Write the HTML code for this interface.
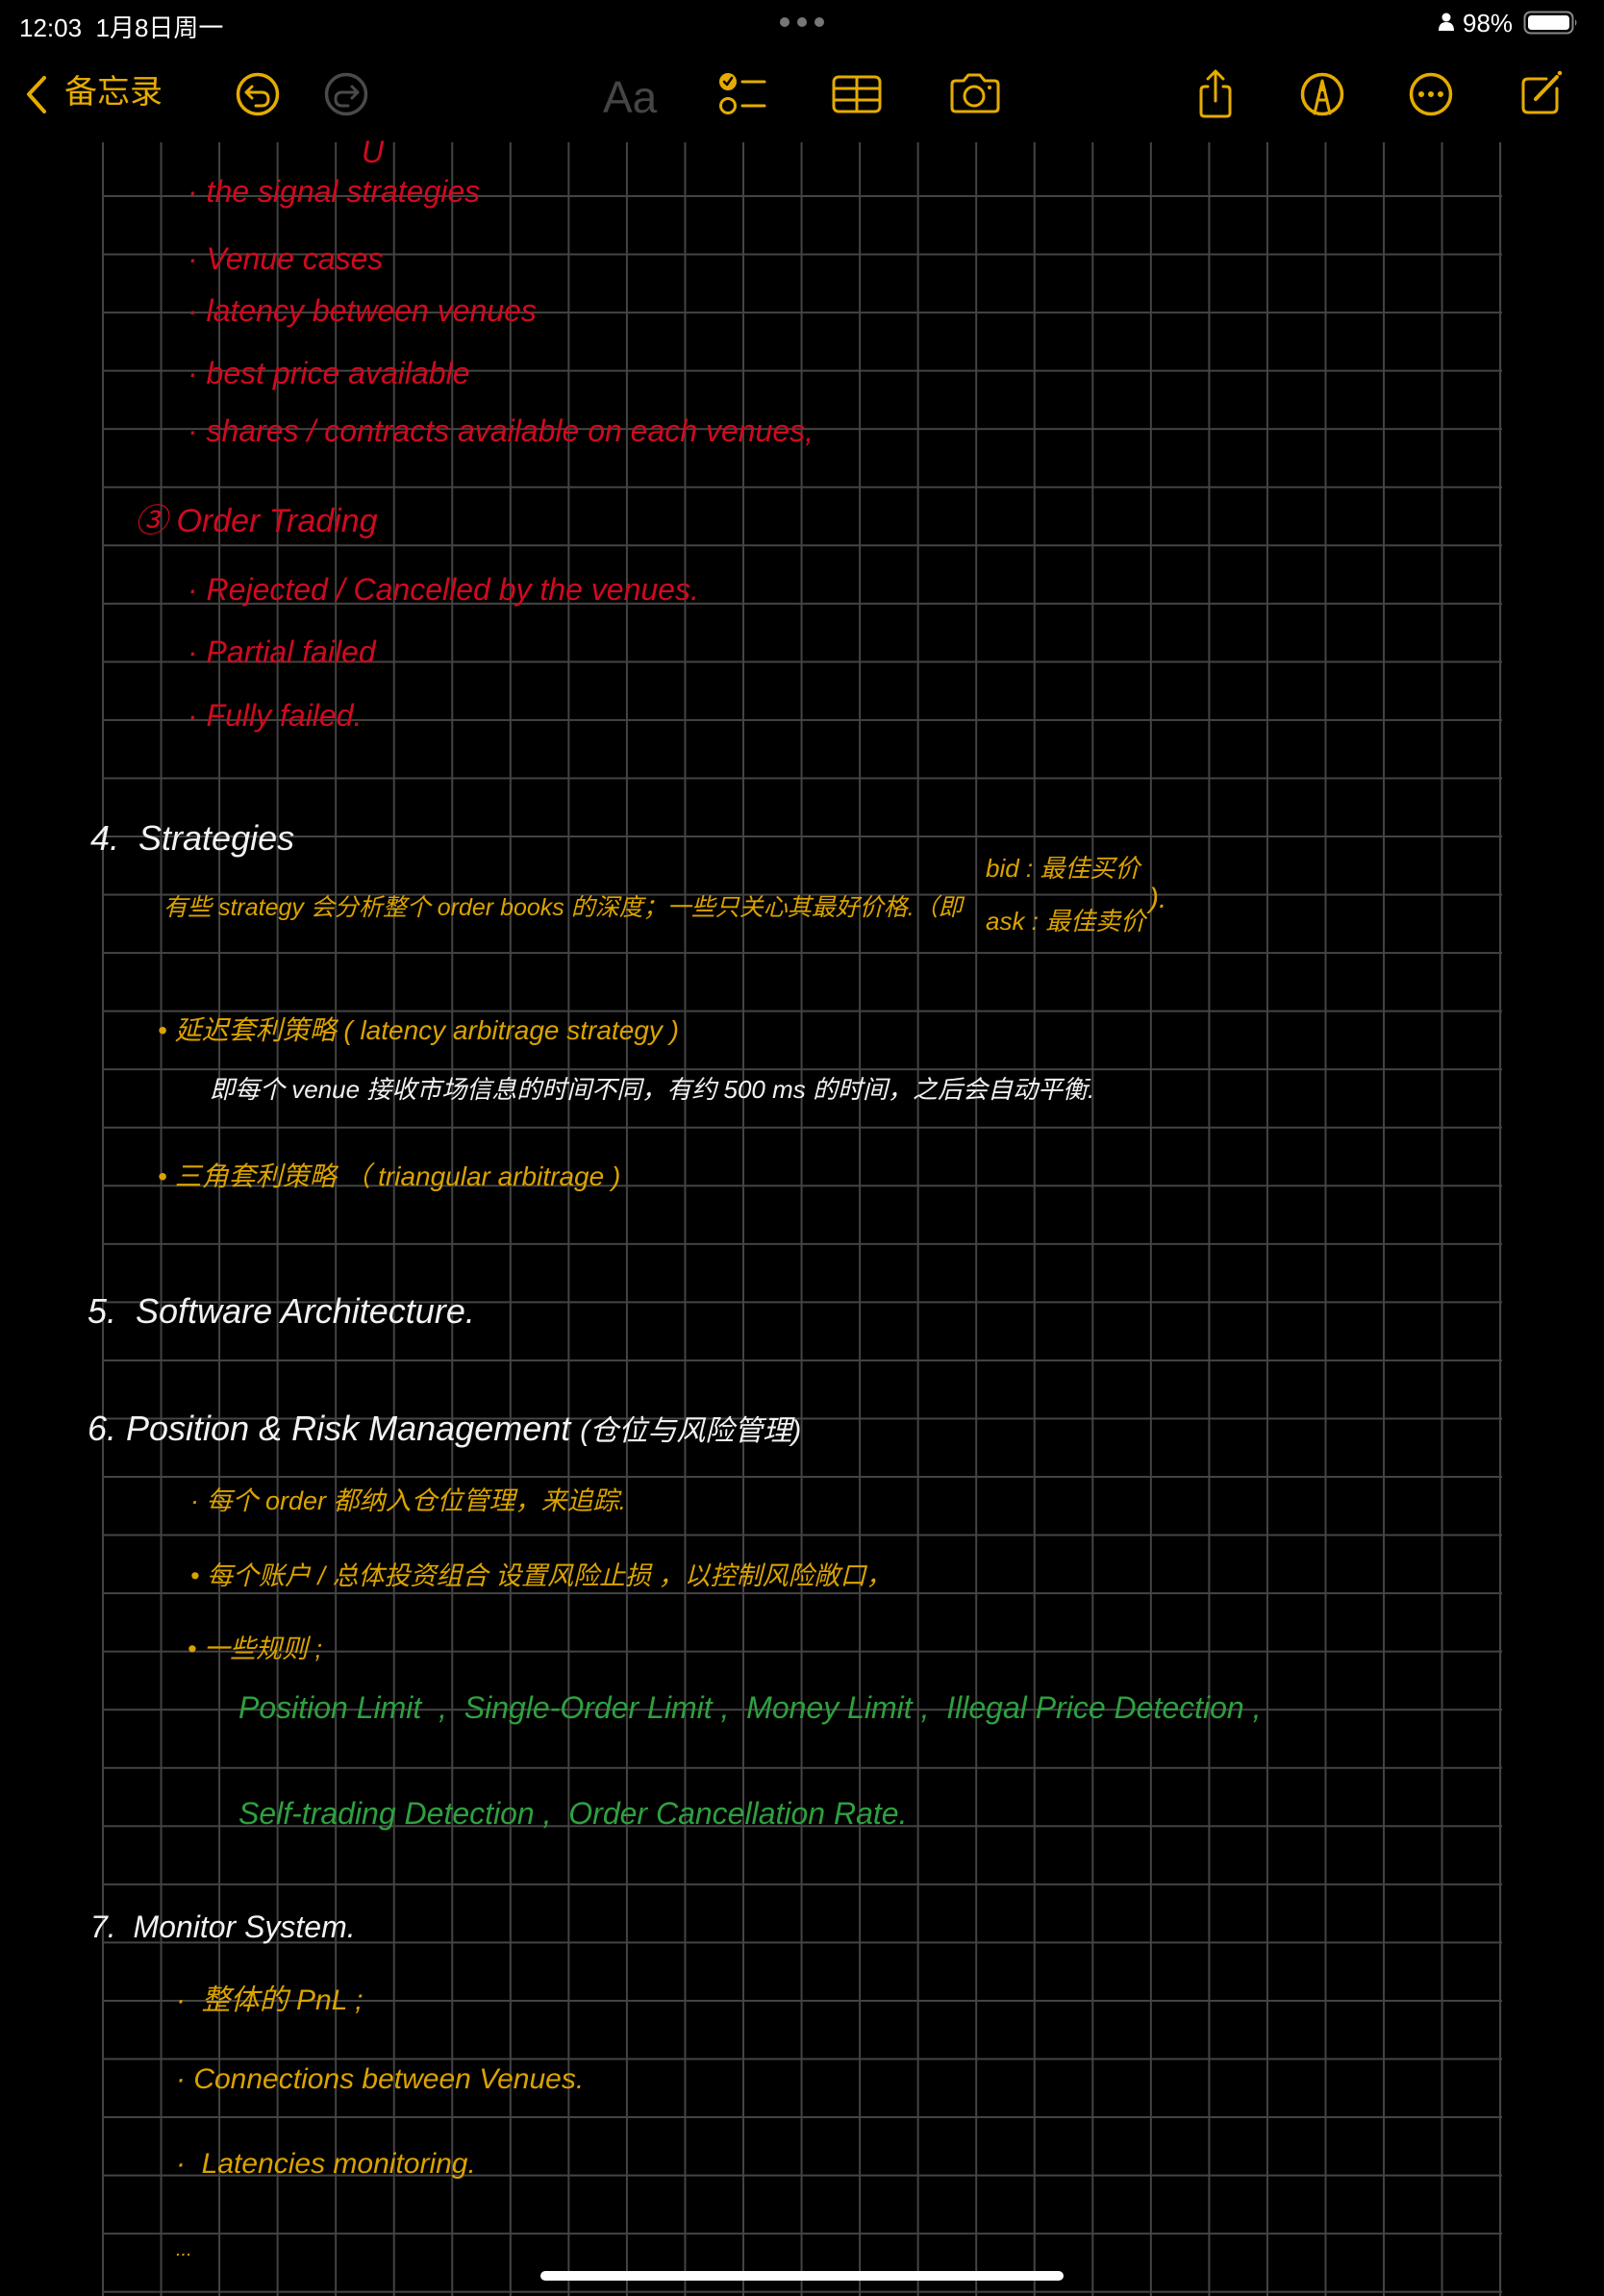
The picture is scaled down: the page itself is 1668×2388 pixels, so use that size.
<!DOCTYPE html>
<html><head><meta charset="utf-8">
<style>
html,body{margin:0;padding:0;background:#000;}
body{width:1668px;height:2388px;position:relative;overflow:hidden;font-family:"Liberation Sans","Noto Sans CJK SC",sans-serif;}
.grid{position:absolute;left:106px;top:148px;width:1456px;height:2240px;
background-image:linear-gradient(to right,#444 2px,transparent 2px),linear-gradient(to bottom,#444 2px,transparent 2px);
background-size:60.55px 60.55px;background-position:0 55px;}
.gr{position:absolute;left:1559px;top:148px;width:2px;height:2240px;background:#444;}
.t{position:absolute;white-space:nowrap;font-family:"Liberation Sans Narrow","Liberation Sans","Noto Sans CJK SC",sans-serif;font-style:italic;line-height:1;}
.r{color:#d00a1f;font-size:32px;}
.y{color:#dba300;font-size:30px;}
.w{color:#f2f2f2;font-size:36px;}
.g{color:#2fa040;font-size:32px;}
.sb{position:absolute;color:#fff;font-size:26px;top:9px;}
</style></head><body>
<div class="grid"></div><div class="gr"></div>

<div class="sb" style="left:20px;">12:03&nbsp;&nbsp;1月8日周一</div>
<svg style="position:absolute;left:810px;top:17px" width="48" height="12"><circle cx="6" cy="6" r="5" fill="#777"/><circle cx="24" cy="6" r="5" fill="#777"/><circle cx="42" cy="6" r="5" fill="#777"/></svg>
<svg style="position:absolute;left:1495px;top:13px" width="18" height="20"><circle cx="9" cy="5" r="4.5" fill="#fff"/><path d="M1 19 Q1 10 9 10 Q17 10 17 19Z" fill="#fff"/></svg>
<div class="sb" style="left:1521px;">98%</div>
<svg style="position:absolute;left:1584px;top:11px" width="60" height="26"><rect x="1.5" y="1.5" width="50" height="22" rx="6" fill="none" stroke="#888" stroke-width="2"/><rect x="5" y="5" width="43" height="15" rx="3.5" fill="#fff"/><path d="M54 9 Q57 12.5 54 16" fill="#888"/></svg>

<!-- toolbar -->
<svg style="position:absolute;left:0;top:70px" width="1668" height="60" fill="none" stroke="#e5ac00" stroke-width="4" stroke-linecap="round" stroke-linejoin="round">
<path d="M46 11 L30 28 L46 46"/>
<circle cx="268" cy="28" r="20.5" stroke-width="3.5"/>
<path d="M262 20 L256 26 L262 32 M256 26 H272 Q279 26 279 33 Q279 40 272 40 H266" stroke-width="3"/>
<circle cx="360" cy="28" r="20.5" stroke="#4a4a4a" stroke-width="3.5"/>
<path d="M366 20 L372 26 L366 32 M372 26 H356 Q349 26 349 33 Q349 40 356 40 H362" stroke="#4a4a4a" stroke-width="3"/>
<circle cx="757" cy="15" r="8" fill="#e5ac00" stroke-width="2"/>
<path d="M753 15 L756 18 L761 11" stroke="#000" stroke-width="2.5"/>
<circle cx="757" cy="40" r="7.5" stroke-width="3"/>
<path d="M772 15 H795 M772 40 H795" stroke-width="3"/>
<rect x="867" y="10" width="48" height="36" rx="5" stroke-width="3"/>
<path d="M867 22 H915 M867 34 H915 M891 10 V46" stroke-width="3"/>
<path d="M990 18 Q990 14 994 14 H1002 L1007 8 H1019 L1024 14 H1034 Q1038 14 1038 18 V42 Q1038 46 1034 46 H994 Q990 46 990 42Z" stroke-width="3"/>
<circle cx="1013" cy="30" r="10" stroke-width="3"/>
<circle cx="1029" cy="21" r="1.5" fill="#e5ac00" stroke-width="1"/>
<path d="M1264 35 V4 M1256 12 L1264 4 L1272 12 M1256 20 H1253 Q1249 20 1249 24 V48 Q1249 51 1253 51 H1275 Q1279 51 1279 48 V24 Q1279 20 1275 20 H1272" stroke-width="3"/>
<circle cx="1375" cy="28" r="20.5" stroke-width="3.5"/>
<path d="M1367 48 L1375 14 L1383 48 M1370 34 H1380" stroke-width="3"/>
<path d="M1372 24 L1375 14 L1378 24Z" fill="#e5ac00" stroke-width="2"/>
<circle cx="1488" cy="28" r="20.5" stroke-width="3.5"/>
<circle cx="1478" cy="28" r="2.5" fill="#e5ac00" stroke-width="1"/><circle cx="1488" cy="28" r="2.5" fill="#e5ac00" stroke-width="1"/><circle cx="1498" cy="28" r="2.5" fill="#e5ac00" stroke-width="1"/>
<path d="M1608 12 H1589 Q1584 12 1584 17 V42 Q1584 47 1589 47 H1614 Q1619 47 1619 42 V22" stroke-width="3"/>
<path d="M1597 33 L1619 10" stroke-width="4"/>
<circle cx="1622" cy="6" r="1.8" fill="#e5ac00" stroke-width="1"/>
</svg>
<div style="position:absolute;left:67px;top:76px;font-size:34px;line-height:40px;color:#e5ac00;font-family:'Liberation Sans','Noto Sans CJK SC',sans-serif;">备忘录</div>
<div style="position:absolute;left:627px;top:74px;font-size:46px;color:#454545;">Aa</div>

<!-- red -->
<div class="t r" style="left:376px;top:142px;">U</div>
<div class="t r" style="left:195px;top:183px;">· the signal strategies</div>
<div class="t r" style="left:195px;top:253px;">· Venue cases</div>
<div class="t r" style="left:195px;top:307px;">· latency between venues</div>
<div class="t r" style="left:195px;top:372px;">· best price available</div>
<div class="t r" style="left:195px;top:432px;">· shares / contracts available on each venues,</div>
<div class="t r" style="left:140px;top:525px;font-size:34px;">③ Order Trading</div>
<div class="t r" style="left:195px;top:597px;">· Rejected / Cancelled by the venues.</div>
<div class="t r" style="left:195px;top:662px;">· Partial failed</div>
<div class="t r" style="left:195px;top:728px;">· Fully failed.</div>

<div class="t w" style="left:94px;top:854px;">4.&nbsp; Strategies</div>
<div class="t y" style="left:170px;top:932px;font-size:25px;">有些 strategy 会分析整个 order books 的深度；一些只关心其最好价格.（即</div>
<div class="t y" style="left:1025px;top:890px;font-size:26px;">bid : 最佳买价</div>
<div class="t y" style="left:1025px;top:945px;font-size:26px;">ask : 最佳卖价</div>
<div class="t y" style="left:1195px;top:920px;">).</div>
<div class="t y" style="left:164px;top:1058px;font-size:28px;">• 延迟套利策略 ( latency arbitrage strategy )</div>
<div class="t w" style="left:218px;top:1120px;font-size:26px;">即每个 venue 接收市场信息的时间不同，有约 500 ms 的时间，之后会自动平衡.</div>
<div class="t y" style="left:164px;top:1210px;font-size:28px;">• 三角套利策略 （ triangular arbitrage )</div>

<div class="t w" style="left:91px;top:1346px;">5.&nbsp; Software Architecture.</div>
<div class="t w" style="left:91px;top:1468px;">6. Position &amp; Risk Management <span style="font-size:30px">(仓位与风险管理)</span></div>
<div class="t y" style="left:198px;top:1548px;font-size:27px;">· 每个 order 都纳入仓位管理，来追踪.</div>
<div class="t y" style="left:198px;top:1626px;font-size:27px;">• 每个账户 / 总体投资组合 设置风险止损 ，以控制风险敞口，</div>
<div class="t y" style="left:195px;top:1702px;font-size:27px;">• 一些规则 ;</div>
<div class="t g" style="left:248px;top:1760px;">Position Limit&nbsp; ,&nbsp; Single-Order Limit ,&nbsp; Money Limit ,&nbsp; Illegal Price Detection ,</div>
<div class="t g" style="left:248px;top:1870px;">Self-trading Detection ,&nbsp; Order Cancellation Rate.</div>

<div class="t w" style="left:94px;top:1988px;font-size:32px;">7.&nbsp; Monitor System.</div>
<div class="t y" style="left:183px;top:2066px;">·&nbsp; 整体的 PnL ;</div>
<div class="t y" style="left:183px;top:2148px;">· Connections between Venues.</div>
<div class="t y" style="left:183px;top:2236px;">·&nbsp; Latencies monitoring.</div>
<div class="t y" style="left:183px;top:2330px;font-size:20px;">...</div>

<div style="position:absolute;left:562px;top:2362px;width:544px;height:10px;border-radius:5px;background:#fff;"></div>
</body></html>
